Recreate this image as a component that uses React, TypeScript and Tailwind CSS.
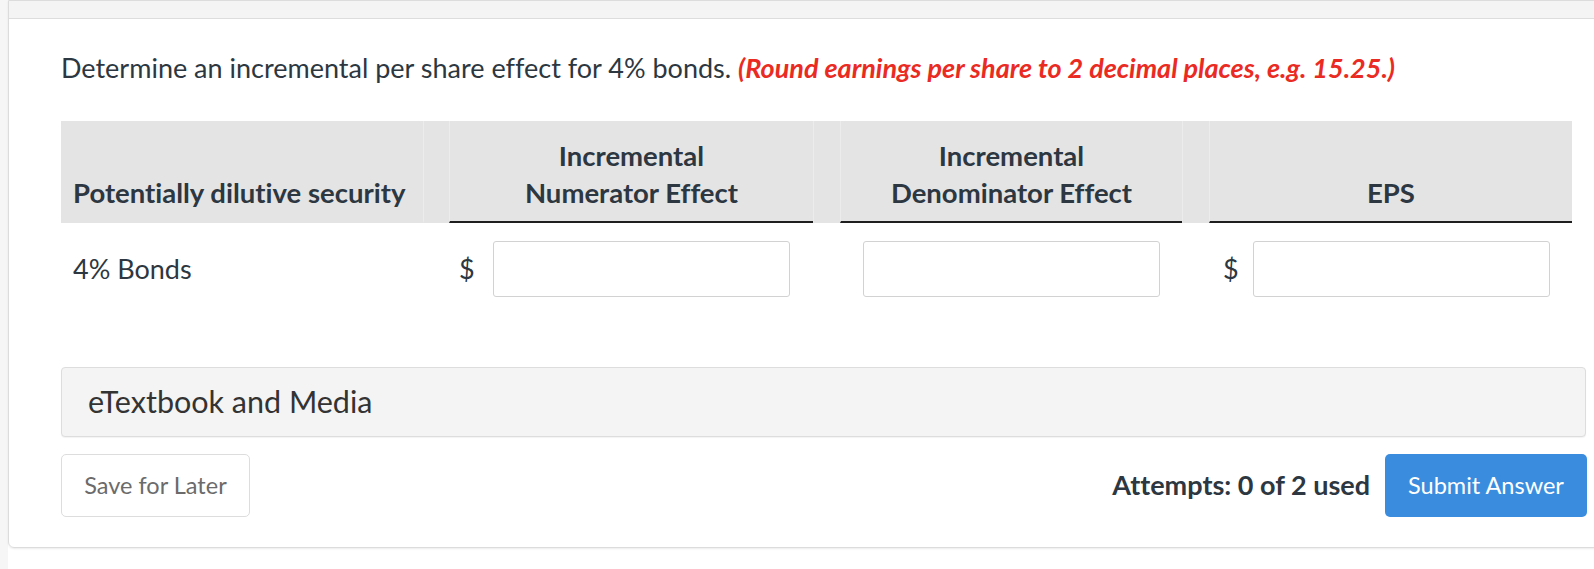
import React from 'react';

// Question: incremental per share effect
const COLS = 'grid-cols-[362px_26px_364px_27px_342px_27px_363px]';

function HeaderCell({
  children,
  underline = false,
  divider = true,
  align = 'center',
}: {
  children?: React.ReactNode;
  underline?: boolean;
  divider?: boolean;
  align?: 'left' | 'center';
}) {
  return (
    <div
      className={[
        'flex h-[102px] items-end bg-[#e4e4e4] pb-[10px] border-b-2',
        underline ? 'border-b-[#1e1e1e]' : 'border-b-transparent',
        divider ? 'border-l border-l-[#ececec]' : '',
        align === 'center' ? 'justify-center text-center' : 'pl-[12px]',
      ].join(' ')}
    >
      <div className="font-bold text-[27.5px] leading-[37px] text-[#2d3741]">{children}</div>
    </div>
  );
}

function AnswerInput() {
  return (
    <input
      type="text"
      className="h-[56px] w-[297px] rounded-[3px] border border-[#d2d2d2] bg-white px-3 text-[22px] outline-none"
    />
  );
}

export default function App() {
  return (
    <div className="h-screen w-screen overflow-hidden bg-white font-['Lato','Liberation_Sans',sans-serif] [font-variant-ligatures:none]">
      <div className="flex w-[1660px] items-start">
        {/* left page strip */}
        <div className="h-[569px] w-[8px] shrink-0 bg-[#f6f6f6]" />

        <div className="w-[1632px] rounded-b-[6px] border border-[#dcdcdc] shadow-[0_1px_2px_rgba(0,0,0,0.08)]">
          <div className="h-[18px] border-b border-[#dddddd] bg-[#f4f4f4]" />

          <div className="pl-[52px] pr-[53px] pt-[31px] pb-[30px]">
            <p className="text-[27px] leading-[36px] text-[#2d3741]">
              Determine an incremental per share effect for 4% bonds.{' '}
              <span className="font-bold italic text-[#ea2b23]">
                (Round earnings per share to 2 decimal places, e.g. 15.25.)
              </span>
            </p>

            {/* table */}
            <div className={`mt-[35px] grid w-[1511px] ${COLS}`}>
              <HeaderCell divider={false} align="left">
                Potentially dilutive security
              </HeaderCell>
              <HeaderCell />
              <HeaderCell underline>
                Incremental
                <br />
                Numerator Effect
              </HeaderCell>
              <HeaderCell />
              <HeaderCell underline>
                Incremental
                <br />
                Denominator Effect
              </HeaderCell>
              <HeaderCell />
              <HeaderCell underline>EPS</HeaderCell>

              {/* row */}
              <div className="flex items-center pl-[12px] pt-[18px] pb-[18px] text-[27px] text-[#2d3741]">4% Bonds</div>
              <div />
              <div className="flex items-center pt-[18px] pb-[18px] text-[27px] text-[#2d3741]">
                <span className="ml-[10px] w-[34px]">$</span>
                <AnswerInput />
              </div>
              <div />
              <div className="flex items-center justify-center pt-[18px] pb-[18px]">
                <AnswerInput />
              </div>
              <div />
              <div className="flex items-center pt-[18px] pb-[18px] text-[27px] text-[#2d3741]">
                <span className="ml-[14px] w-[30px]">$</span>
                <AnswerInput />
              </div>
            </div>

            {/* eTextbook */}
            <div className="mt-[52px] flex h-[70px] w-[1525px] items-center rounded-[4px] border border-[#dddddd] bg-[#f4f4f4] pl-[26px] shadow-[0_1px_1px_rgba(0,0,0,0.05)]">
              <span className="text-[30.5px] text-[#333333]">eTextbook and Media</span>
            </div>

            {/* actions */}
            <div className="mt-[17px] flex w-[1526px] items-center justify-between">
              <button className="h-[63px] w-[189px] rounded-[5px] border border-[#dddddd] bg-white text-[23.5px] text-[#6b6b6b]">
                Save for Later
              </button>
              <div className="flex items-center gap-[15px]">
                <span className="text-[27px] font-bold text-[#2d3741]">Attempts: 0 of 2 used</span>
                <button className="h-[63px] w-[202px] rounded-[5px] bg-[#3a8dde] text-[23.5px] text-white">
                  Submit Answer
                </button>
              </div>
            </div>
          </div>
        </div>
      </div>
    </div>
  );
}
